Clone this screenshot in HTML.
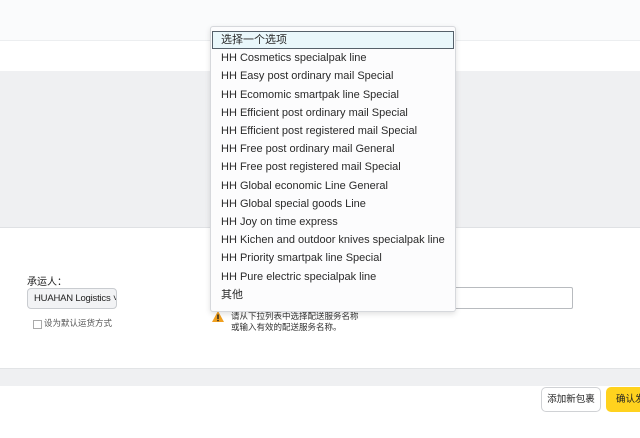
<!DOCTYPE html>
<html><head><meta charset="utf-8"><style>
body{margin:0;width:640px;height:438px;overflow:hidden;position:relative;background:#fff;font-family:"Liberation Sans","Noto Sans CJK SC",sans-serif;color:#222}
.abs{position:absolute}
.dd{left:210px;top:26px;width:244px;height:284px;background:#fcfcfd;border:1px solid #d6d8dc;border-radius:3px;box-shadow:0 2px 6px rgba(0,0,0,.12)}
.it{position:absolute;left:10px;font-size:11px;line-height:18px;height:18px;white-space:nowrap;color:#2a2a2a}
</style></head><body>
<div class="abs" style="left:0;top:0;width:640px;height:40px;background:#fafbfc"></div>
<div class="abs" style="left:0;top:40px;width:640px;height:1px;background:#eceef0"></div>
<div class="abs" style="left:0;top:71px;width:640px;height:156px;background:#eff0f2"></div>
<div class="abs" style="left:0;top:227px;width:640px;height:1px;background:#dfe1e4"></div>
<div class="abs" style="left:0;top:368px;width:640px;height:17px;background:#eff0f2;border-top:1px solid #e2e4e6"></div>
<div class="abs" style="left:27px;top:273px;font-size:10px">承运人：</div>
<div class="abs" style="left:27px;top:288px;width:90px;height:21px;border:1px solid #c9ccd0;border-radius:4px;background:#f2f3f5;font-size:9.5px;letter-spacing:-0.2px;line-height:19px;box-sizing:border-box;padding-left:6px;white-space:nowrap;overflow:hidden">HUAHAN Logistics ˅</div>
<div class="abs" style="left:33px;top:320px;width:7px;height:7px;border:1px solid #aaa"></div>
<div class="abs" style="left:44px;top:317px;font-size:8.5px;color:#555;white-space:nowrap">设为默认运货方式</div>
<div class="abs" style="left:370px;top:287px;width:203px;height:22px;border:1px solid #b8bbbf;box-sizing:border-box;border-radius:2px"></div>
<svg class="abs" style="left:211px;top:310px" width="14" height="13"><path d="M7 1L13 12H1Z" fill="#f0a020"/><rect x="6.3" y="4.5" width="1.4" height="4.5" fill="#222"/><rect x="6.3" y="9.8" width="1.4" height="1.4" fill="#222"/></svg>
<div class="abs" style="left:231px;top:311px;font-size:8.5px;line-height:11px;color:#333;white-space:nowrap">请从下拉列表中选择配送服务名称<br>或输入有效的配送服务名称。</div>
<div class="abs" style="left:541px;top:387px;width:60px;height:25px;border:1px solid #d0d2d5;border-radius:5px;box-sizing:border-box;font-size:9.5px;line-height:23px;text-align:center">添加新包裹</div>
<div class="abs" style="left:606px;top:387px;width:40px;height:25px;background:#ffd21e;border-radius:5px;font-size:9.5px;line-height:25px;padding-left:10px;box-sizing:border-box;white-space:nowrap">确认发</div>
<div class="abs dd">
<div class="abs" style="left:1px;top:4px;width:242px;height:18px;background:#e9f7fb;border:1px solid #55606a;box-sizing:border-box"></div>
<div class="it" style="top:4px">选择一个选项</div>
<div class="it" style="top:22.2px">HH Cosmetics specialpak line</div>
<div class="it" style="top:40.4px">HH Easy post ordinary mail Special</div>
<div class="it" style="top:58.6px">HH Ecomomic smartpak line Special</div>
<div class="it" style="top:76.8px">HH Efficient post ordinary mail Special</div>
<div class="it" style="top:95px">HH Efficient post registered mail Special</div>
<div class="it" style="top:113.2px">HH Free post ordinary mail General</div>
<div class="it" style="top:131.4px">HH Free post registered mail Special</div>
<div class="it" style="top:149.6px">HH Global economic Line General</div>
<div class="it" style="top:167.8px">HH Global special goods Line</div>
<div class="it" style="top:186px">HH Joy on time express</div>
<div class="it" style="top:204.2px">HH Kichen and outdoor knives specialpak line</div>
<div class="it" style="top:222.4px">HH Priority smartpak line Special</div>
<div class="it" style="top:240.6px">HH Pure electric specialpak line</div>
<div class="it" style="top:258.8px">其他</div>
</div>
</body></html>
